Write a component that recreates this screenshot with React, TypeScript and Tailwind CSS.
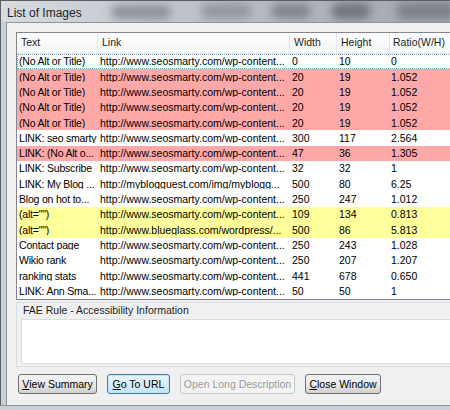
import React from 'react';

type Row = { text: string; link: string; w: string; h: string; r: string; tone?: 'red' | 'yellow' };

const SEO = 'http://www.seosmarty.com/wp-content...';

const rows: Row[] = [
  { text: '(No Alt or Title)', link: SEO, w: '0', h: '10', r: '0' },
  { text: '(No Alt or Title)', link: SEO, w: '20', h: '19', r: '1.052', tone: 'red' },
  { text: '(No Alt or Title)', link: SEO, w: '20', h: '19', r: '1.052', tone: 'red' },
  { text: '(No Alt or Title)', link: SEO, w: '20', h: '19', r: '1.052', tone: 'red' },
  { text: '(No Alt or Title)', link: SEO, w: '20', h: '19', r: '1.052', tone: 'red' },
  { text: 'LINK: seo smarty', link: SEO, w: '300', h: '117', r: '2.564' },
  { text: 'LINK: (No Alt o...', link: SEO, w: '47', h: '36', r: '1.305', tone: 'red' },
  { text: 'LINK: Subscribe', link: SEO, w: '32', h: '32', r: '1' },
  { text: 'LINK: My Blog ...', link: 'http://myblogguest.com/img/myblogg...', w: '500', h: '80', r: '6.25' },
  { text: 'Blog on hot to...', link: SEO, w: '250', h: '247', r: '1.012' },
  { text: '(alt="")', link: SEO, w: '109', h: '134', r: '0.813', tone: 'yellow' },
  { text: '(alt="")', link: 'http://www.blueglass.com/wordpress/...', w: '500', h: '86', r: '5.813', tone: 'yellow' },
  { text: 'Contact page', link: SEO, w: '250', h: '243', r: '1.028' },
  { text: 'Wikio rank', link: SEO, w: '250', h: '207', r: '1.207' },
  { text: 'ranking stats', link: SEO, w: '441', h: '678', r: '0.650' },
  { text: 'LINK: Ann Sma...', link: SEO, w: '50', h: '50', r: '1' },
];

const toneCls = {
  red: 'bg-[#ffa8a8]',
  yellow: 'bg-[#ffff9c]',
};

function Button({ children, variant, width }: { children: React.ReactNode; variant?: 'default' | 'disabled'; width: string }) {
  const base = `${width} h-[20px] rounded-[3px] border text-[10.5px] leading-none flex items-center justify-center whitespace-nowrap`;
  if (variant === 'default') {
    return (
      <div className={`${base} border-[#3c7fb1] bg-gradient-to-b from-[#eaf6fd] to-[#c4e5f6] text-black shadow-[inset_0_0_0_1px_#bfe6fa]`}>
        {children}
      </div>
    );
  }
  if (variant === 'disabled') {
    return <div className={`${base} border-[#c3c6c9] bg-[#f4f4f4] text-[#9a9a9a]`}>{children}</div>;
  }
  return (
    <div className={`${base} border-[#707070] bg-gradient-to-b from-[#f2f2f2] via-[#ebebeb] to-[#cfcfcf] text-black`}>
      {children}
    </div>
  );
}

export default function App() {
  return (
    <div className="w-[450px] h-[410px] overflow-hidden bg-[#c4cad1] font-['Liberation_Sans',Arial,sans-serif] text-black flex flex-col">
      {/* title bar */}
      <div className="relative h-[22px] shrink-0 border-l border-t border-[#5a5f66] bg-gradient-to-r from-[#d7dce1] via-[#b9bec4] to-[#a3a8ae] overflow-hidden">
        <div className="absolute left-[110px] top-[4px] h-[14px] w-[60px] rounded-full bg-[#8d9299] blur-[4px]" />
        <div className="absolute left-[200px] top-[3px] h-[14px] w-[50px] rounded-full bg-[#91969c] blur-[4px]" />
        <div className="absolute left-[270px] top-[3px] h-[14px] w-[40px] rounded-full bg-[#7f848b] blur-[4px]" />
        <div className="absolute left-[330px] top-[2px] h-[16px] w-[40px] rounded-full bg-[#6f747b] blur-[5px]" />
        <div className="absolute left-[395px] top-[2px] h-[16px] w-[60px] rounded-full bg-[#7b8087] blur-[5px]" />
        <span className="relative block pl-[6px] pt-[5px] text-[12px] leading-[14px] text-[#1e1e1e]">List of Images</span>
      </div>

      <div className="flex flex-1 min-h-0 border-l border-[#5a5f66]">
        <div className="w-[5px] shrink-0 bg-[#c9cfd5]" />
        <div className="flex-1 min-w-0 border-l border-t border-[#8e949b] bg-[#f0f0f0] flex flex-col">
          {/* table */}
          <div className="ml-[9px] mt-[9px] w-[460px] border border-[#828790] bg-white">
            <div className="flex h-[21px] bg-gradient-to-b from-white to-[#f3f4f6] border-b border-[#e3e5e8] text-[10.5px] text-[#1e1e1e] items-center">
              <div className="w-[81px] pl-[4px] border-r border-[#e0e3e6] h-full flex items-center">Text</div>
              <div className="w-[192px] pl-[4px] border-r border-[#e0e3e6] h-full flex items-center">Link</div>
              <div className="w-[47px] pl-[4px] border-r border-[#e0e3e6] h-full flex items-center">Width</div>
              <div className="w-[53px] pl-[4px] border-r border-[#e0e3e6] h-full flex items-center">Height</div>
              <div className="flex-1 pl-[3px] h-full flex items-center">Ratio(W/H)</div>
            </div>
            {rows.map((row, i) => (
              <div
                key={i}
                className={`flex h-[15.3px] items-center text-[10.5px] leading-none whitespace-nowrap ${row.tone ? toneCls[row.tone] : ''} ${
                  i === 0 ? 'outline-1 outline-dotted outline-[#7da2ce] -outline-offset-1' : ''
                }`}
              >
                <div className="w-[81px] pl-[2px] overflow-hidden tracking-[-0.2px]">{row.text}</div>
                <div className="w-[192px] pl-[2px] overflow-hidden">{row.link}</div>
                <div className="w-[47px] pl-[2px]">{row.w}</div>
                <div className="w-[53px] pl-[2px]">{row.h}</div>
                <div className="flex-1 pl-[1px]">{row.r}</div>
              </div>
            ))}
          </div>

          {/* FAE box */}
          <div className="ml-[9px] mt-[2px] w-[460px] border border-[#d5dfe5] bg-[#f0f0f0] pl-[4px] pb-[2px]">
            <div className="h-[16px] pl-[2px] text-[10.5px] leading-[14px] text-[#1e1e1e]">FAE Rule - Accessibility Information</div>
            <div className="h-[45px] border border-[#dcdcdc] bg-white" />
          </div>

          {/* buttons */}
          <div className="ml-[11px] mt-[7px] flex gap-[10px]">
            <Button width="w-[79px]">
              <span className="underline">V</span>iew Summary
            </Button>
            <Button variant="default" width="w-[63px]">
              <span className="underline">G</span>o To URL
            </Button>
            <Button variant="disabled" width="w-[115px]">Open Long Description</Button>
            <Button width="w-[76px]">
              <span className="underline">C</span>lose Window
            </Button>
          </div>
          <div className="flex-1" />
        </div>
      </div>
      <div className="h-[5px] shrink-0 border-t border-[#8e949b] bg-[#c9cfd5]" />
    </div>
  );
}
